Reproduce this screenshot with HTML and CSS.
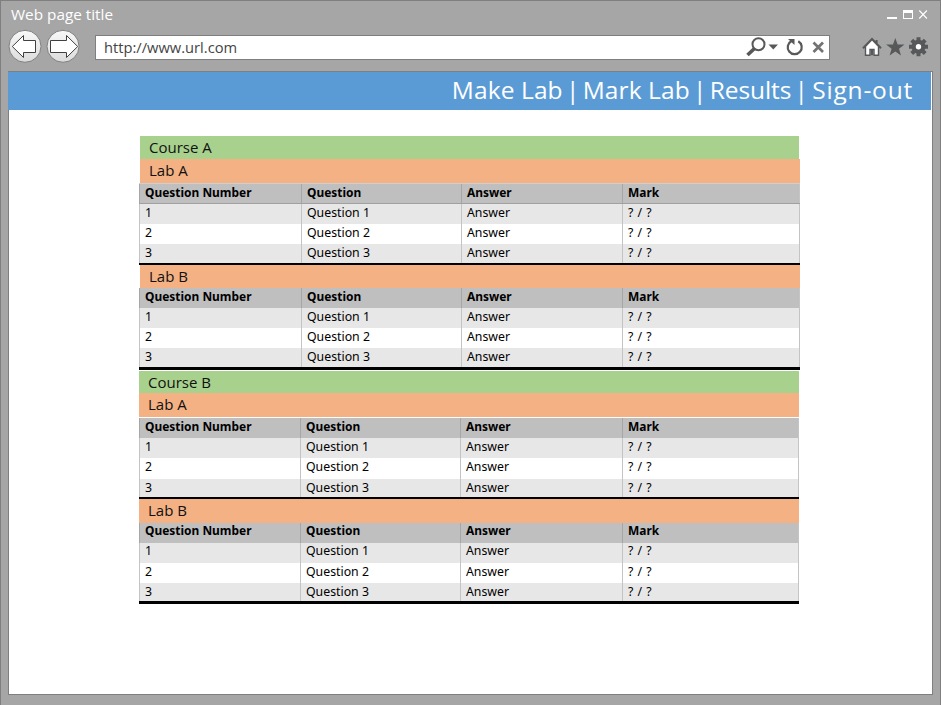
FILE: index.html
```
<!DOCTYPE html>
<html lang="en">
<head>
<meta charset="utf-8">
<title>Web page title</title>
<link rel="stylesheet" href="styles.css">
</head>
<body>
<div class="window">
  <header class="titlebar">
    <span class="title">Web page title</span>
    <svg class="controls" width="42" height="12" viewBox="0 0 42 12">
      <path d="M0 9h10v2H0z" fill="#fff"/>
      <path d="M16 2h10v9H16zM17 5v5h8V5z" fill="#fff" fill-rule="evenodd"/>
      <path d="M32.3 2.5l7.6 8M39.9 2.5l-7.6 8" stroke="#fff" stroke-width="1.1" fill="none"/>
    </svg>
  </header>
  <div class="toolbar">
    <svg class="nav" width="72" height="34" viewBox="0 0 72 34">
      <defs><linearGradient id="g" x1="0" y1="0" x2="0" y2="1"><stop offset="0" stop-color="#f8f8f8"/><stop offset="1" stop-color="#dcdcdc"/></linearGradient></defs>
      <circle cx="17" cy="17.300" r="16" fill="url(#g)" stroke="#808080"/>
      <circle cx="55" cy="17.300" r="16" fill="url(#g)" stroke="#808080"/>
      <path d="M4.300 17.500L15.500 6.500v5h12v12h-12v5z" fill="#fff" stroke="#404040"/>
      <path d="M69.700 17.500L58.500 6.500v5h-16v12h16v5z" fill="#fff" stroke="#404040"/>
    </svg>
    <div class="address">
      <span class="url">http://www.url.com</span>
      <svg class="tools" width="80" height="22" viewBox="0 0 80 22">
        <circle cx="12.500" cy="8.300" r="6" fill="#fff" stroke="#57585a" stroke-width="2"/>
        <path d="M8.500 12.500L1.500 19" stroke="#57585a" stroke-width="3.600"/>
        <path d="M22.500 8.500h9.500l-4.700 5z" fill="#57585a"/>
        <path d="M45.500 5A7 7 0 1 0 52.300 5.200" fill="none" stroke="#57585a" stroke-width="2.200"/>
        <path d="M42 3h6.500v6z" fill="#57585a"/>
        <path d="M67.500 6.500l9.500 9.500M77 6.500l-9.500 9.500" stroke="#727375" stroke-width="2.700"/>
      </svg>
    </div>
    <svg class="actions" width="68" height="22" viewBox="0 0 68 22">
      <path d="M5 11L11 4.500l6 6.500v8.500H5z" fill="#fff"/>
      <path d="M2 12.200L11 3l9 9.200M15.600 7.500V4" fill="none" stroke="#57585a" stroke-width="2"/>
      <path d="M4.500 11v8.300H9v-5.800h4v5.800h4.500V11" fill="none" stroke="#57585a" stroke-width="1.400"/>
      <path d="M9.500 14h3v5.500h-3z" fill="#57585a"/>
      <path d="M34.300 2l2.300 6.400 6.900.2-5.500 4.200 2 6.700-5.700-4-5.700 4 2-6.700-5.500-4.200 6.900-.2z" fill="#57585a"/>
      <g transform="translate(57.500 10.800)" fill="#57585a">
        <circle r="7"/>
        <path d="M-2-9.500h4v19h-4zM-9.500-2h19v4h-19z"/>
        <path d="M-2-9.500h4v19h-4zM-9.500-2h19v4h-19z" transform="rotate(45)"/>
        <circle r="2.700" fill="#fff"/>
      </g>
    </svg>
  </div>
  <main class="page">
    <nav class="menu">
      <a class="item">Make Lab</a><span class="bar">|</span><a class="item">Mark Lab</a><span class="bar">|</span><a class="item results">Results</a><span class="bar">|</span><a class="item sign-out">Sign-out</a>
    </nav>
    <section class="course course-a">
      <h1>Course A</h1>
      <h2>Lab A</h2>
      <div class="lab lab-1">
        <div class="row head"><b>Question Number</b><b>Question</b><b>Answer</b><b>Mark</b></div>
        <div class="row"><span>1</span><span>Question 1</span><span>Answer</span><span>? / ?</span></div>
        <div class="row"><span>2</span><span>Question 2</span><span>Answer</span><span>? / ?</span></div>
        <div class="row"><span>3</span><span>Question 3</span><span>Answer</span><span>? / ?</span></div>
      </div>
      <h2>Lab B</h2>
      <div class="lab lab-2">
        <div class="row head"><b>Question Number</b><b>Question</b><b>Answer</b><b>Mark</b></div>
        <div class="row"><span>1</span><span>Question 1</span><span>Answer</span><span>? / ?</span></div>
        <div class="row"><span>2</span><span>Question 2</span><span>Answer</span><span>? / ?</span></div>
        <div class="row"><span>3</span><span>Question 3</span><span>Answer</span><span>? / ?</span></div>
      </div>
    </section>
    <section class="course course-b">
      <h1>Course B</h1>
      <h2>Lab A</h2>
      <div class="lab lab-3">
        <div class="row head"><b>Question Number</b><b>Question</b><b>Answer</b><b>Mark</b></div>
        <div class="row"><span>1</span><span>Question 1</span><span>Answer</span><span>? / ?</span></div>
        <div class="row"><span>2</span><span>Question 2</span><span>Answer</span><span>? / ?</span></div>
        <div class="row"><span>3</span><span>Question 3</span><span>Answer</span><span>? / ?</span></div>
      </div>
      <h2>Lab B</h2>
      <div class="lab lab-4">
        <div class="row head"><b>Question Number</b><b>Question</b><b>Answer</b><b>Mark</b></div>
        <div class="row"><span>1</span><span>Question 1</span><span>Answer</span><span>? / ?</span></div>
        <div class="row"><span>2</span><span>Question 2</span><span>Answer</span><span>? / ?</span></div>
        <div class="row"><span>3</span><span>Question 3</span><span>Answer</span><span>? / ?</span></div>
      </div>
    </section>
  </main>
</div>
</body>
</html>
```
FILE: styles.css
```
* { box-sizing: border-box; }
body { margin: 0; font-family: "Open Sans", "Noto Sans", sans-serif; }
svg { display: block; flex: none; }
.window {
  width: 941px; height: 705px; overflow: hidden;
  background: #a6a6a6;
  border: 1px solid #7f7f7f; border-bottom: 0;
}
.titlebar {
  display: flex; justify-content: space-between;
  height: 28px; padding: 0 11px 0 10px;
}
.title { font-size: 15.300px; line-height: 27px; color: #fff; }
.controls { margin-top: 7px; }
.toolbar { display: flex; height: 42px; padding-left: 7px; }
.address {
  display: flex; justify-content: space-between;
  width: 735px; height: 25px; margin: 6px 0 0 15px; padding: 0 3px 0 8px;
  background: #fff; border: 1px solid #7f7f7f;
}
.url { font-size: 14.700px; line-height: 23px; color: #444; }
.actions { margin: 7px 0 0 31px; }
.page {
  width: 925px; height: 624px; margin-left: 7px;
  background: #fff; border: 1px solid #7f7f7f;
}
.menu {
  display: flex; justify-content: flex-end;
  width: 923px; height: 38px; margin-left: -1px; padding-right: 18px;
  background: #5b9bd5; color: #fff;
  font-size: 24.500px; line-height: 35px; white-space: nowrap;
}
.bar { width: 20px; text-align: center; }
.item { letter-spacing: .1px; }
.results { letter-spacing: -.1px; }
.sign-out { margin-left: 1px; letter-spacing: .8px; }
.course { width: 661px; margin-left: 130px; }
.course-a { margin-top: 26px; }
.course-b { margin-top: 1px; }
h1, h2 { margin: 0 0 0 1px; padding-left: 9px; font-size: 15px; font-weight: 400; color: #111; }
h1 { width: 659px; height: 23px; line-height: 23px; background: #a9d18e; }
h2 { width: 660px; height: 24px; line-height: 23px; background: #f4b183; }
.lab { display: grid; border-bottom: 2px solid #000; font-family: "Noto Sans", "Open Sans", sans-serif; }
.row {
  display: grid; grid-template-columns: 162px 160px 161px 178px;
  background: #e7e7e7; color: #000; font-size: 12.300px; line-height: 17px;
}
.row > * { padding-left: 5px; border-left: 1px solid #c4c4c4; white-space: nowrap; }
.row > :last-child { border-right: 1px solid #c4c4c4; word-spacing: 1px; }
.row:nth-child(3) { background: #fff; }
.head { background: #bfbfbf; font-size: 11.950px; }
.head > * { border-color: #a6a6a6; }
.lab-1 { border-top: 1px solid #d0d0d0; grid-template-rows: 20px 20px 20px 19px; }
.lab-1 .head { border-bottom: 1px solid #a0a0a0; }
.lab-1 + h2 { height: 23px; }
.lab-2 { grid-template-rows: 20px 20px 20px 19px; border-bottom-width: 3px; }
.course-b .row { grid-template-columns: 161px 160px 162px 177px; }
.course-b { width: 660px; }
.course-b h1, .course-b h2 { width: 660px; margin-left: 0; padding-left: 9px; }
.course-b h1 { height: 22px; }
.lab-3 { border-top: 1px solid #fff; grid-template-rows: 20px 20px 21px 18px; }
.lab-4 { grid-template-rows: 20px 20px 20px 18px; border-bottom-width: 3px; }
.lab-4 .head, .lab-4 .row:nth-child(2) { line-height: 15px; }
```
